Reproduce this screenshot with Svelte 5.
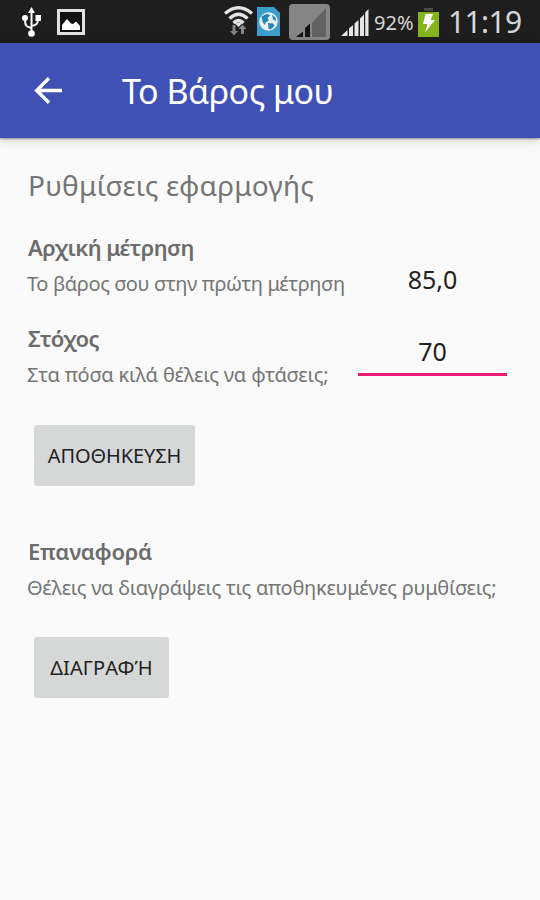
<script lang="ts">
  let initial = $state('85,0');
  let goal = $state('70');
</script>

<div class="screen">
  <div class="status">
    <svg class="usb" width="24" height="32" viewBox="0 0 24 32" fill="none" stroke="#fff" stroke-width="2">
      <path d="M10.500 4v21M10.500 21c-5-1-6.500-2-6.500-9M10.500 19c5-1 6.500-2 6.500-7" />
      <path d="M10.500 0l3.500 6H7z" fill="#fff" stroke="none" />
      <circle cx="4" cy="11" r="3" fill="#fff" stroke="none" />
      <path d="M14.500 8H20v6h-5.500z" fill="#fff" stroke="none" />
      <circle cx="10.500" cy="26.500" r="3.300" fill="#fff" stroke="none" />
    </svg>
    <svg class="picture" width="28" height="26" viewBox="0 0 28 26">
      <rect x="1.500" y="1.500" width="25" height="23" fill="#111" stroke="#e0e0e0" stroke-width="3" />
      <path d="M5 21v-5l5-6 4 4.500 2 .5 3-2.500 4 4.500v4z" fill="#fff" />
    </svg>
    <svg class="wifi" width="32" height="32" viewBox="0 0 32 32" fill="none" stroke="#e4e4e4" stroke-width="3.300">
      <path d="M1 8.500Q14.500-3 28 8.500" />
      <path d="M5.500 13.500Q14.500 5 23.500 13.500" />
      <path d="M9.500 18Q14.500 13 19.500 18" />
      <path d="M11 18.500q3.500-2 7 0L14.500 22z" fill="#e4e4e4" stroke="none" />
      <path d="M8.500 20h3v6H14l-4 4.500L6 26h2.500zM17 29v-5h-2.500l4-4.500 4 4.500H20v5z" fill="#858585" stroke="none" />
    </svg>
    <svg class="sim" width="23" height="29" viewBox="0 0 23 29">
      <path d="M0 0h17l6 6v23H0z" fill="#3b9dcc" />
      <circle cx="11.500" cy="14.500" r="9.300" fill="#e8eef0" />
      <path d="M4.500 9.500l5-2.500 4 1-3 3 1.500 2.500-3 1.500-1.500 3-2-3.500zM15 7.500l3.500 3 .5 3.500-3-1.500zM11 16l5 .5 1.500 2.500-4 3.500-2-1z" fill="#2485b8" />
    </svg>
    <svg class="roaming" width="41" height="36" viewBox="0 0 41 36">
      <rect width="41" height="36" rx="4" fill="#858585" />
      <path d="M23 19L37 4v29H23z" fill="#626262" />
      <path d="M7 33l7-5.500V33zM16 33v-9l5-4.500V33z" fill="#111" />
    </svg>
    <svg class="signal" width="28" height="27" viewBox="0 0 28 27">
      <path d="M0 27l6.500-6v6zM8 27v-7.500l4-3.500v11zM13.500 27V14.500l4-3.500v16zM19 27V9.500l4-4V27zM24.200 27V3.500L27.500 0v27z" fill="#e6e6e6" />
    </svg>
    <span class="percent">92%</span>
    <svg class="battery" width="21" height="29" viewBox="0 0 21 29">
      <path d="M6 0h9v3H6z" fill="#4a4a4a" />
      <path d="M0 4h21v25H0z" fill="#84b41c" />
      <path d="M7.500 6h7.500l-2.500 6H17L7 24.500l2.500-8.500H5z" fill="#fff" />
    </svg>
    <span class="clock">11:19</span>
  </div>

  <header>
    <svg class="back" width="28" height="27" viewBox="0 0 28 27" fill="none" stroke="#fff" stroke-width="3.400">
      <path d="M28 13.500H3M15 1.200L2.700 13.500 15 25.800" />
    </svg>
    <h1>Το Βάρος μου</h1>
  </header>

  <main>
    <h2>Ρυθμίσεις εφαρμογής</h2>

    <div class="row">
      <div class="text">
        <h3>Αρχική μέτρηση</h3>
        <p class="first">Το βάρος σου στην πρώτη μέτρηση</p>
      </div>
      <input class="initial" bind:value={initial} aria-label="Αρχική μέτρηση" />
    </div>

    <div class="row">
      <div class="text">
        <h3>Στόχος</h3>
        <p class="second">Στα πόσα κιλά θέλεις να φτάσεις;</p>
      </div>
      <input class="goal" bind:value={goal} aria-label="Στόχος" />
    </div>

    <button class="save">ΑΠΟΘΗΚΕΥΣΗ</button>

    <div class="text reset">
      <h3 class="reset-label">Επαναφορά</h3>
      <p class="third">Θέλεις να διαγράψεις τις αποθηκευμένες ρυμθίσεις;</p>
    </div>

    <button class="delete">ΔΙΑΓΡΑΦΉ</button>
  </main>
</div>

<style>
  :global(body) {
    margin: 0;
    background: #fafafa;
  }
  .screen {
    width: 540px;
    height: 900px;
    overflow: hidden;
    background: #fafafa;
    color: #757575;
    font-family: 'Noto Sans', 'Open Sans', sans-serif;
  }
  .status {
    display: flex;
    align-items: flex-start;
    height: 43px;
    background: #1e1e1e;
    color: #d6d6d6;
    white-space: nowrap;
  }
  .status svg {
    flex: none;
  }
  .usb { margin: 7px 0 0 21px; }
  .picture { margin: 9px 0 0 12px; }
  .wifi { margin: 5px 0 0 139px; }
  .sim { margin: 7px 0 0 1px; }
  .roaming { margin: 4px 0 0 9px; }
  .signal { margin: 9px 0 0 11px; }
  .percent {
    width: 40px;
    margin: 9px 0 0 5px;
    font-size: 20px;
    line-height: 28px;
  }
  .battery { margin: 8px 0 0 4px; }
  .clock {
    margin: 2px 0 0 9px;
    font-size: 30px;
    line-height: 40px;
    letter-spacing: -0.6px;
  }
  header {
    position: relative;
    display: flex;
    align-items: center;
    height: 95px;
    background: #3f51b5;
    box-shadow: 0 1px 2px rgba(0, 0, 0, 0.35), 0 3px 9px rgba(0, 0, 0, 0.15);
    color: #fff;
  }
  .back {
    margin-left: 34px;
  }
  h1 {
    margin: 0 0 0 60px;
    font-size: 34px;
    font-weight: 400;
    line-height: 46px;
    letter-spacing: -0.5px;
    white-space: nowrap;
  }
  main {
    display: flex;
    flex-direction: column;
    align-items: flex-start;
    padding: 27px 28px 0;
  }
  h2 {
    margin: 0 0 23px;
    font-size: 28px;
    font-weight: 400;
    line-height: 40px;
    letter-spacing: 0.2px;
    white-space: nowrap;
  }
  .row {
    display: flex;
    align-items: flex-start;
    width: 100%;
    height: 91px;
  }
  .text {
    width: 330px;
    flex: none;
    white-space: nowrap;
  }
  h3 {
    margin: 0;
    font-size: 22px;
    font-weight: 600;
    line-height: 38px;
    letter-spacing: -0.55px;
    color: #6c6c6c;
  }
  .reset-label {
    letter-spacing: -0.2px;
  }
  p {
    margin: 1px 0 0 -1px;
    font-size: 20px;
    line-height: 34px;
  }
  .first { letter-spacing: -0.38px; }
  .second { letter-spacing: -0.16px; }
  .third { letter-spacing: -0.25px; }
  input {
    box-sizing: border-box;
    width: 149px;
    padding: 0;
    border: 0;
    outline: 0;
    background: none;
    color: #212121;
    font-family: inherit;
    font-size: 25px;
    text-align: center;
  }
  .initial {
    height: 36px;
    margin-top: 33px;
  }
  .goal {
    height: 44px;
    margin-top: 13px;
    padding-bottom: 3px;
    border-bottom: 3px solid #e91e73;
  }
  button {
    height: 61px;
    padding: 0;
    border: 0;
    border-radius: 3px;
    background: #d6d8d7;
    color: #212121;
    font-family: inherit;
    font-size: 20px;
    white-space: nowrap;
  }
  .save {
    width: 161px;
    margin: 15px 0 0 6px;
    letter-spacing: -0.1px;
  }
  .reset {
    margin-top: 46px;
  }
  .delete {
    width: 135px;
    margin: 32px 0 0 6px;
    letter-spacing: 0.1px;
  }
</style>
